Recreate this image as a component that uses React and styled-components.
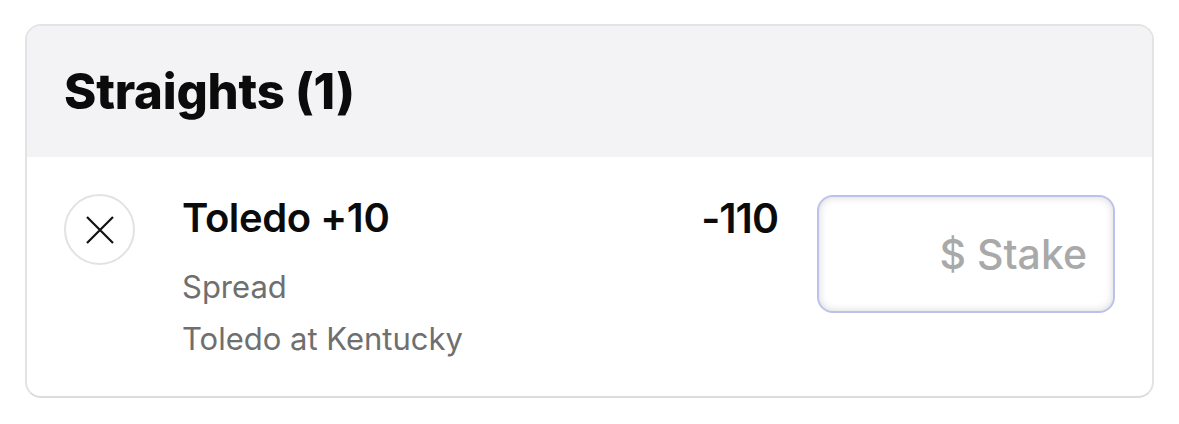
import React from "react";
import styled, { createGlobalStyle } from "styled-components";

const Global = createGlobalStyle`
  body {
    margin: 0;
    background: #ffffff;
    font-family: Inter, "Noto Sans", "Liberation Sans", sans-serif;
    color: #0b0b0b;
  }
`;

const Page = styled.div`
  padding: 24px 25px;
`;

const Card = styled.div`
  border: 2px solid #e3e3e6;
  border-bottom-color: #dcdcdf;
  border-radius: 16px;
  overflow: hidden;
  background: #ffffff;
`;

const Header = styled.div`
  background: #f3f3f5;
  height: 131px;
  display: flex;
  align-items: center;
  padding-left: 37px;
`;

const Title = styled.h2`
  margin: 0;
  font-size: 49px;
  font-weight: 800;
  letter-spacing: -0.2px;
`;

const Row = styled.div`
  display: flex;
  align-items: flex-start;
  padding: 37px 37px 31px 37px;
`;

const CloseBtn = styled.button`
  width: 71px;
  height: 71px;
  flex: none;
  border-radius: 50%;
  border: 2px solid #e2e2e2;
  background: #fff;
  display: flex;
  align-items: center;
  justify-content: center;
  padding: 0;
  margin-right: 47px;
`;

const Info = styled.div`
  flex: 1;
  display: flex;
  flex-direction: column;
`;

const Pick = styled.div`
  font-size: 40px;
  line-height: 48px;
  font-weight: 600;
  letter-spacing: -0.4px;
  margin-bottom: 19px;
`;

const Sub = styled.div`
  font-size: 31px;
  line-height: 52px;
  color: #6f6f6f;
`;

const Odds = styled.div`
  font-size: 41px;
  line-height: 48px;
  font-weight: 600;
  letter-spacing: -1px;
  margin-right: 39px;
`;

const Stake = styled.input`
  width: 298px;
  height: 118px;
  box-sizing: border-box;
  margin-top: 1px;
  border: 2px solid #bcc2ea;
  border-radius: 16px;
  box-shadow: inset 0 0 9px rgba(0, 0, 0, 0.16);
  background: #fff;
  text-align: right;
  padding: 0 26px;
  font-family: inherit;
  font-size: 41px;
  font-weight: 500;
  outline: none;
  &::placeholder {
    color: #a9a9a9;
  }
`;

const XIcon = () => (
  <svg width="28" height="28" viewBox="0 0 28 28">
    <path d="M1 1 L27 27 M27 1 L1 27" stroke="#111" strokeWidth="2.2" fill="none" />
  </svg>
);

export default function App() {
  return (
    <Page>
      <Global />
      <Card>
        <Header>
          <Title>Straights (1)</Title>
        </Header>
        <Row>
          <CloseBtn aria-label="remove">
            <XIcon />
          </CloseBtn>
          <Info>
            <Pick>Toledo +10</Pick>
            <Sub>Spread</Sub>
            <Sub>Toledo at Kentucky</Sub>
          </Info>
          <Odds>-110</Odds>
          <Stake placeholder="$ Stake" />
        </Row>
      </Card>
    </Page>
  );
}
